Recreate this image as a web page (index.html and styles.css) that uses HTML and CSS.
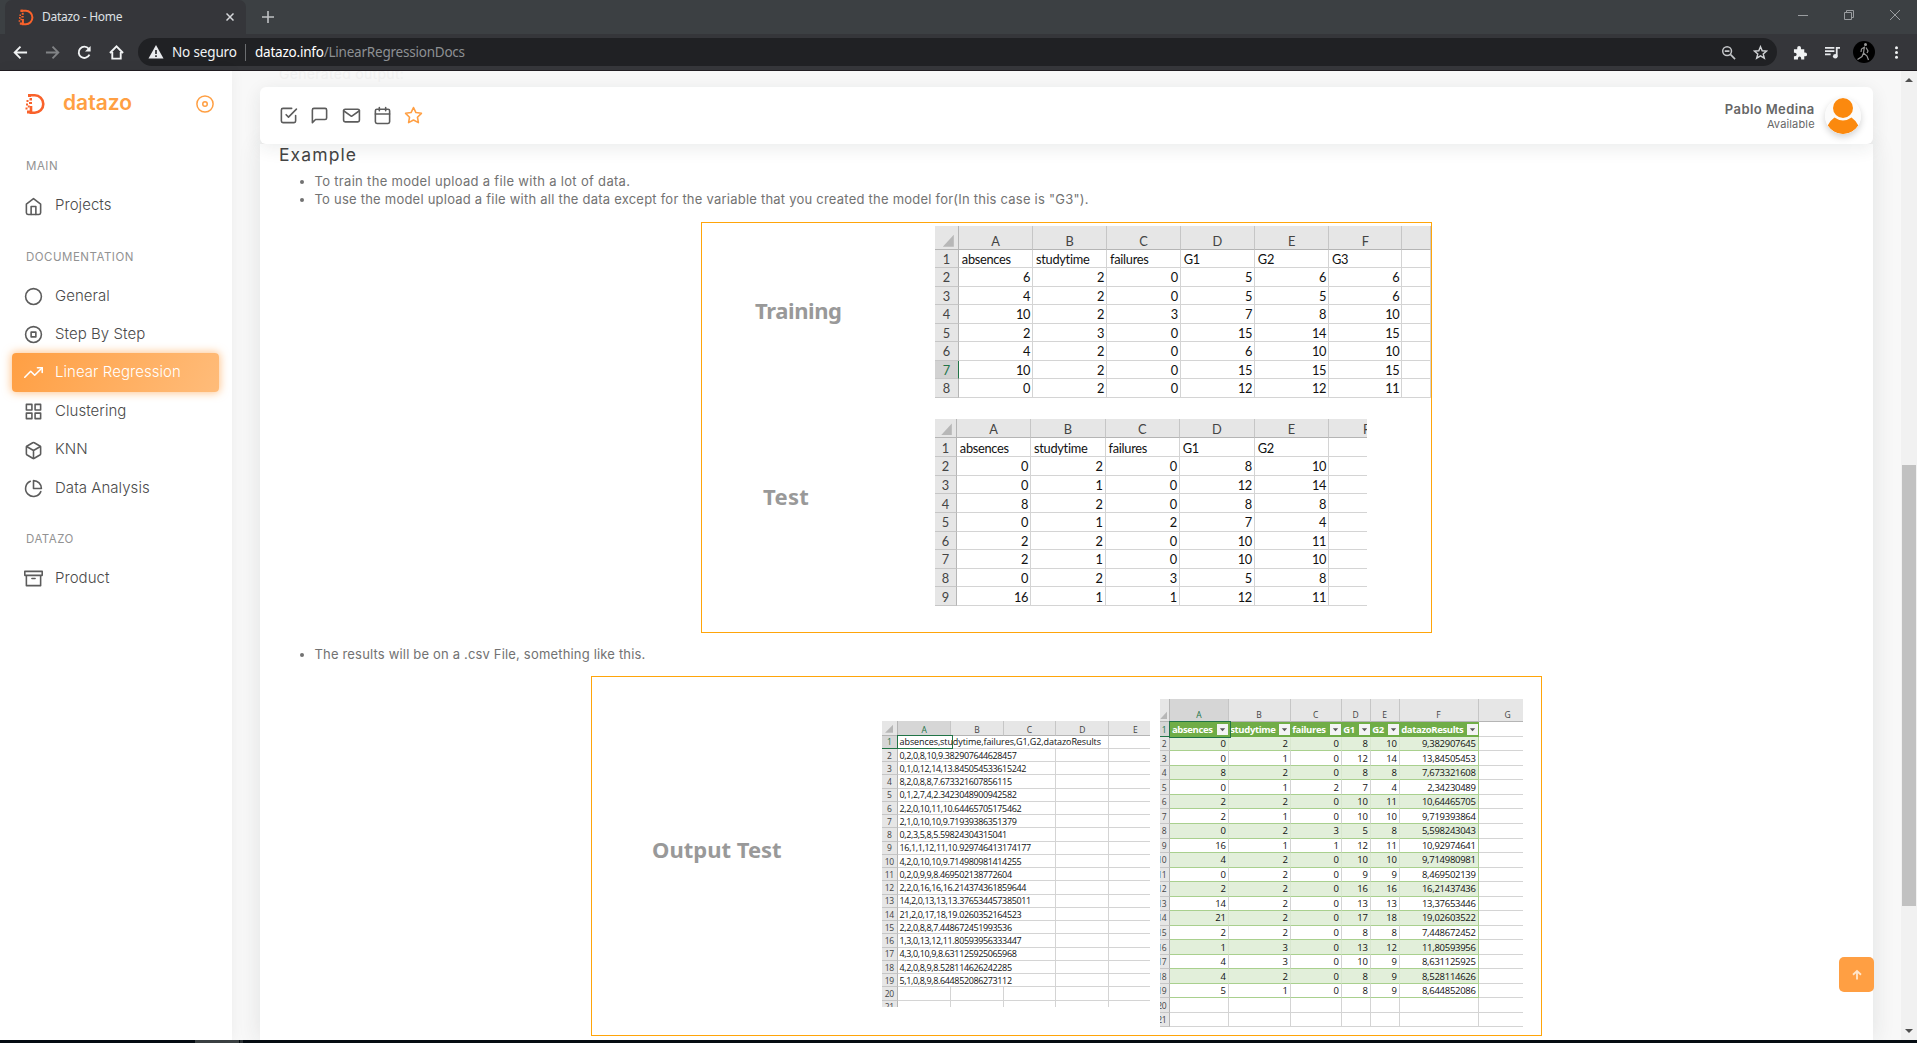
FILE: index.html
```
<!DOCTYPE html>
<html lang="es">
<head>
<meta charset="utf-8">
<title>Datazo - Home</title>
<link rel="stylesheet" href="styles.css">
</head>
<body>
<svg class="defs" aria-hidden="true">
  <symbol id="logo" viewBox="0 0 20 22">
    <path d="M3 2.300h6.800a8.500 8.700 0 0 1 0 17.400H4.500M6 13v7" fill="none" stroke="#f9622b" stroke-width="2.600"/>
    <path d="M3 1h3v3H3zM4.500 5h2.500v2.500H4.500zM1.500 7h2v2h-2zM4 9h3v2H4zM1 10.500h2v2H1zM2.800 12.500h2v2h-2zM.5 14.500h2v2h-2zM2 17.500h3v3H2z" fill="#f9622b"/>
  </symbol>
</svg>

<header class="tabstrip">
  <div class="tab">
    <svg class="favicon"><use href="#logo"/></svg>
    <span class="tab-title">Datazo - Home</span>
    <svg class="tab-close" viewBox="0 0 8 8"><path d="M.5.5l7 7M7.500.5l-7 7" stroke="#d5d7da" stroke-width="1.500"/></svg>
  </div>
  <svg class="new-tab" viewBox="0 0 12 12"><path d="M6 0v12M0 6h12" stroke="#bfc1c4" stroke-width="1.600"/></svg>
  <div class="window-buttons">
    <svg viewBox="0 0 12 12"><path d="M1 6.500h10" stroke="#9a9da0"/></svg>
    <svg viewBox="0 0 12 12"><path d="M1.500 3.500h7v7h-7zM3.500 3.500v-2h7v7h-2" fill="none" stroke="#9a9da0"/></svg>
    <svg viewBox="0 0 12 12"><path d="M1 1l10 10M11 1L1 11" stroke="#9a9da0"/></svg>
  </div>
</header>

<div class="toolbar">
  <span class="tool"><svg viewBox="0 0 16 16"><path d="M15 8H2M8 1.800L1.800 8 8 14.200" fill="none" stroke="#f1f3f4" stroke-width="2"/></svg></span>
  <span class="tool"><svg viewBox="0 0 16 16"><path d="M1 8h13M8 1.800L14.200 8 8 14.200" fill="none" stroke="#818386" stroke-width="2"/></svg></span>
  <span class="tool"><svg viewBox="0 0 16 16"><path d="M13.300 10.300A6 6 0 1 1 12.500 4" fill="none" stroke="#f1f3f4" stroke-width="2"/><path d="M14.500 1v6h-6z" fill="#f1f3f4"/></svg></span>
  <span class="tool"><svg viewBox="0 0 16 16"><path d="M1 8.500L8 1.500l7 7M3.500 7.500v7h9v-7" fill="none" stroke="#f1f3f4" stroke-width="2"/></svg></span>
  <div class="omnibox">
    <svg class="warning" viewBox="0 0 16 14"><path d="M8 0l7.500 13.500H.5z" fill="#e8eaed"/><path d="M8 5v4M8 10.300v1.700" stroke="#202124" stroke-width="1.600"/></svg>
    <span class="insecure">No seguro</span>
    <span class="url"><b>datazo.info</b><i>/LinearRegressionDocs</i></span>
    <span class="tool"><svg viewBox="0 0 16 16"><circle cx="6.500" cy="6.500" r="4.700" fill="none" stroke="#c4c6c9" stroke-width="1.600"/><path d="M4 6.500h5M10 10l5 5" stroke="#c4c6c9" stroke-width="1.700"/></svg></span>
    <span class="tool"><svg viewBox="0 0 16 16"><path d="M8 1.800l1.800 4.400 4.700.3-3.600 3 1.200 4.600L8 11.600l-4.100 2.500 1.200-4.600-3.600-3 4.700-.3z" fill="none" stroke="#d0d2d5" stroke-width="1.500"/></svg></span>
  </div>
  <span class="tool"><svg viewBox="0 0 16 16"><path d="M1 4.500h3.500V3a2 2 0 0 1 4 0v1.500H12V8h1a2 2 0 0 1 0 4h-1v3.500H8.700V14a1.700 1.700 0 0 0-3.400 0v1.500H1V12h1a1.900 1.900 0 0 0 0-3.800H1z" fill="#f1f3f4"/></svg></span>
  <span class="tool"><svg viewBox="0 0 16 16"><path d="M0 3h10M0 6.500h10M0 10h6M12.500 12V3H16" fill="none" stroke="#e8eaed" stroke-width="1.900"/><circle cx="11" cy="12" r="2.500" fill="#e8eaed"/></svg></span>
  <span class="tool"><svg class="profile" viewBox="0 0 22 22"><circle cx="11" cy="11" r="11"/><circle cx="12.500" cy="3.500" r="1.500" fill="#999"/><path d="M11.500 5.500l-1 6.500 3.500 3 1.500 4M10.500 12L9 15.500l-4.500 3M11.500 6L8.500 8l-.5 3M13 6.500l2 3.500-1 2" fill="none" stroke="#959595" stroke-width="1.200"/></svg></span>
  <span class="tool"><svg viewBox="0 0 16 16" fill="#f1f3f4"><circle cx="8" cy="3" r="1.600"/><circle cx="8" cy="8" r="1.600"/><circle cx="8" cy="13" r="1.600"/></svg></span>
</div>

<div class="page">
  <nav class="sidebar">
    <div class="brand">
      <svg class="brand-logo"><use href="#logo"/></svg>
      <span class="brand-name">datazo</span>
      <svg class="icon accent" viewBox="0 0 24 24"><circle cx="12" cy="12" r="10.800"/><circle cx="12" cy="12" r="3"/></svg>
    </div>
    <h6 class="section first">MAIN</h6>
    <a class="item"><svg class="icon" viewBox="0 0 24 24"><path d="M3 9l9-7 9 7v11a2 2 0 0 1-2 2H5a2 2 0 0 1-2-2z"/><path d="M9 22V12h6v10"/></svg>Projects</a>
    <h6 class="section">DOCUMENTATION</h6>
    <a class="item"><svg class="icon" viewBox="0 0 24 24"><circle cx="12" cy="12" r="10"/></svg>General</a>
    <a class="item"><svg class="icon" viewBox="0 0 24 24"><circle cx="12" cy="12" r="10"/><path d="M9 9h6v6H9z"/></svg>Step By Step</a>
    <a class="item active"><svg class="icon" viewBox="0 0 24 24"><path d="M23 6l-9.500 9.500-5-5L1 18"/><path d="M17 6h6v6"/></svg>Linear Regression</a>
    <a class="item"><svg class="icon" viewBox="0 0 24 24"><path d="M3 3h7v7H3zM14 3h7v7h-7zM14 14h7v7h-7zM3 14h7v7H3z"/></svg>Clustering</a>
    <a class="item"><svg class="icon" viewBox="0 0 24 24"><path d="M21 16V8a2 2 0 0 0-1-1.730l-7-4a2 2 0 0 0-2 0l-7 4A2 2 0 0 0 3 8v8a2 2 0 0 0 1 1.730l7 4a2 2 0 0 0 2 0l7-4A2 2 0 0 0 21 16z"/><path d="M3.270 6.960L12 12.010l8.730-5.050M12 22.080V12"/></svg>KNN</a>
    <a class="item"><svg class="icon" viewBox="0 0 24 24"><path d="M21.210 15.890A10 10 0 1 1 8 2.830"/><path d="M22 12A10 10 0 0 0 12 2v10z"/></svg>Data Analysis</a>
    <h6 class="section">DATAZO</h6>
    <a class="item"><svg class="icon" viewBox="0 0 24 24"><path d="M21 8v13H3V8M1 3h22v5H1zM10 12h4"/></svg>Product</a>
  </nav>

  <main class="main">
    <div class="faded">Generated output:</div>
    <div class="navbar">
      <svg class="icon" viewBox="0 0 24 24"><path d="M9 11l3 3L22 4"/><path d="M21 12v7a2 2 0 0 1-2 2H5a2 2 0 0 1-2-2V5a2 2 0 0 1 2-2h11"/></svg>
      <svg class="icon" viewBox="0 0 24 24"><path d="M21 15a2 2 0 0 1-2 2H7l-4 4V5a2 2 0 0 1 2-2h14a2 2 0 0 1 2 2z"/></svg>
      <svg class="icon" viewBox="0 0 24 24"><path d="M4 4h16c1.100 0 2 .9 2 2v12c0 1.100-.9 2-2 2H4c-1.100 0-2-.9-2-2V6c0-1.100.9-2 2-2z"/><path d="M22 6l-10 7L2 6"/></svg>
      <svg class="icon" viewBox="0 0 24 24"><rect x="3" y="4" width="18" height="18" rx="2"/><path d="M16 2v4M8 2v4M3 10h18"/></svg>
      <svg class="icon accent" viewBox="0 0 24 24"><path d="M12 2l3.090 6.260L22 9.270l-5 4.870 1.180 6.880L12 17.770l-6.180 3.250L7 14.140 2 9.270l6.910-1.010z"/></svg>
      <div class="user"><strong>Pablo Medina</strong><span>Available</span></div>
      <svg class="avatar" viewBox="0 0 36 36"><circle cx="18" cy="18" r="18" fill="#fbfbfb"/><circle cx="18" cy="10" r="10" fill="#fb890e"/><path d="M2.700 27.500Q5 22.500 9.500 19.500Q18 25.500 26.500 19.500Q31 22.500 33.300 27.500A18 18 0 0 1 2.700 27.500z" fill="#fb890e"/></svg>
    </div>
    <section class="content">
      <h4>Example</h4>
      <ul>
        <li class="l1">To train the model upload a file with a lot of data.</li>
        <li class="l2">To use the model upload a file with all the data except for the variable that you created the model for(In this case is "G3").</li>
      </ul>
      <figure class="inputs">
        <h2 class="training-label">Training</h2>
        <div class="sheet big" id="training"></div>
        <h2 class="test-label">Test</h2>
        <div class="sheet big" id="test"></div>
      </figure>
      <ul>
        <li class="l3">The results will be on a .csv File, something like this.</li>
      </ul>
      <figure class="outputs">
        <h2>Output Test</h2>
        <div class="sheet small csv" id="csv"></div>
        <div class="sheet small results" id="results"></div>
      </figure>
    </section>
    <a class="to-top"><svg viewBox="0 0 24 24"><path d="M12 21V4M4 11.500L12 4l8 7.500" fill="none" stroke="#ffe6cb" stroke-width="3.600"/></svg></a>
  </main>

  <div class="scrollbar"><i class="up"></i><div class="thumb"></div><i class="down"></i></div>
</div>
<footer class="taskbar"><span></span><em></em></footer>
<script src="sheets.js"></script>
</body>
</html>
```
FILE: styles.css
```
* { box-sizing: border-box; }
body { margin: 0; height: 1043px; display: flex; flex-direction: column; overflow: hidden; font-family: Inter, "Liberation Sans", sans-serif; background: #f8f8f8; }
h2, h4, h6, ul, figure { margin: 0; padding: 0; }
svg { display: block; flex: none; }
.defs { width: 0; height: 0; position: absolute; }

/* browser chrome */
.tabstrip { height: 34px; flex: none; background: #3c4043; display: flex; align-items: center; padding-left: 5px; }
.tab { width: 241px; height: 34px; background: #35363a; border-radius: 7px 7px 0 0; display: flex; align-items: center; padding: 0 12px 0 13px; }
.favicon { width: 16px; height: 17px; }
.tab-title { margin-left: 8px; font: 12px/16px "Noto Sans", sans-serif; letter-spacing: -.27px; color: #dfe1e5; flex: 1; padding-bottom: 1px; }
.tab-close { width: 8px; height: 8px; }
.new-tab { width: 12px; height: 12px; margin-left: 16px; }
.window-buttons { margin-left: auto; display: flex; gap: 34px; padding: 0 16px 5px 0; }
.window-buttons svg { width: 12px; height: 12px; }
.toolbar { height: 37px; flex: none; background: #35363a; border-bottom: 1px solid #211d22; display: flex; align-items: center; padding: 0 5px 0 4px; }
.tool { width: 32px; display: flex; justify-content: center; flex: none; }
.tool svg { width: 15px; height: 15px; }
.tool .profile { width: 22px; height: 22px; }
.omnibox { flex: 1; height: 28px; margin: 0 7px 0 6px; padding: 0 1px 0 10px; border-radius: 14px; background: #202124; display: flex; align-items: center; font: 13.5px "Noto Sans", sans-serif; }
.omnibox .warning { width: 16px; height: 14px; }
.insecure { margin-left: 8px; padding-right: 8px; border-right: 1px solid #6b6d70; color: #f1f3f4; letter-spacing: -.15px; line-height: 17px; width: 74px; white-space: nowrap; }
.url { flex: 1; padding-left: 9px; letter-spacing: -.22px; }
.url b { font-weight: 400; color: #fff; }
.url i { font-style: normal; color: #8d9093; }

.page { flex: 1; min-height: 0; display: flex; }

/* sidebar */
.icon { width: 19px; height: 19px; fill: none; stroke: #5c5c5c; stroke-width: 2; stroke-linecap: round; stroke-linejoin: round; }
.icon.accent { stroke: #ff9f43; }
.sidebar { width: 232px; flex: none; background: #fff; box-shadow: 0 0 14px rgba(0,0,0,.05); z-index: 1; }
.brand { height: 65px; display: flex; align-items: center; padding: 0 18px 0 25px; }
.brand-logo { width: 20px; height: 22px; }
.brand-name { flex: 1; margin-left: 18px; font-size: 21px; font-weight: 600; line-height: 24px; padding-bottom: 1px; color: #ff9f43; }
.brand .icon { width: 18px; height: 18px; }
.section { height: 37.6px; margin: 14.4px 0 0 26px; line-height: 37px; font-size: 11.500px; font-weight: 400; letter-spacing: .5px; color: #929292; }
.section.first { margin-top: 12.4px; }
.item { height: 38.4px; margin: 0 13px 0 12px; padding-left: 12px; display: flex; align-items: center; gap: 12px; font-size: 15px; font-weight: 300; letter-spacing: .05px; line-height: 18px; color: #4a4a4a; border-radius: 4px; }
.item .icon { position: relative; top: 1px; }
.item.active { color: #fff; background: linear-gradient(118deg, #ff9f43, #ffbc7a); box-shadow: 0 0 8px 1px rgba(255,159,67,.6); }
.item.active .icon { stroke: #fff; top: 0; }

/* main column */
.main { flex: 1; min-width: 0; padding: 0 28px; display: flex; flex-direction: column; position: relative; overflow: hidden; }
.faded { height: 16px; flex: none; padding-left: 19px; font-size: 14px; line-height: 5px; color: #f0f0f0; letter-spacing: .3px; }
.navbar { height: 57px; flex: none; background: #fff; border-radius: 6px; box-shadow: 0 4px 18px rgba(34,41,47,.09); z-index: 1; display: flex; align-items: center; gap: 12.300px; padding: 0 12px 0 19px; }
.user { margin-left: auto; text-align: right; display: flex; flex-direction: column; margin-right: -2px; color: #666; }
.user strong { font-size: 13px; font-weight: 600; letter-spacing: .4px; line-height: 16px; }
.user span { font-size: 11px; line-height: 14px; letter-spacing: .15px; }
.avatar { width: 36px; height: 36px; border-radius: 50%; box-shadow: 0 3px 7px rgba(0,0,0,.18); }
.content { flex: 1; min-height: 0; background: #fff; padding: 0 19px; box-shadow: 0 0 22px rgba(34,41,47,.11); }
.content h4 { font-size: 17.500px; font-weight: 400; line-height: 22px; letter-spacing: 1.1px; color: #444; margin-bottom: 6px; }
.content ul { padding-left: 35.5px; font-size: 13px; line-height: 18.2px; color: #727272; }
.content li { white-space: nowrap; }
.l1 { letter-spacing: .314px; }
.l2 { letter-spacing: .226px; }
.l3 { letter-spacing: .175px; }
figure { border: 1px solid #ffa50a; margin: 0 auto !important; }
figure h2 { font: 700 22px "Noto Sans", sans-serif; color: #999; white-space: nowrap; }
.inputs { width: 731px; height: 411px; margin-top: 13.600px !important; margin-bottom: 11.500px !important; padding-top: 3.300px; display: grid; grid-template-columns: 233px 1fr; align-content: start; align-items: center; row-gap: 21px; }
.training-label { padding: 0 0 4px 53px; letter-spacing: -.4px; }
.inputs .test-label { padding: 0 0 33px 61px; letter-spacing: .3px; }
.outputs { width: 951px; height: 360px; margin-top: 13.300px !important; display: flex; align-items: flex-start; }
.outputs h2 { width: 289.700px; padding: 157px 0 0 60px; }

/* spreadsheets */
.sheet { display: grid; overflow: hidden; justify-content: start; color: #111; }
.cell { min-width: 0; border-right: 1px solid #d4d4d4; border-bottom: 1px solid #d4d4d4; display: flex; align-items: center; justify-content: flex-end; white-space: nowrap; overflow: hidden; }
.cell.text { justify-content: flex-start; }
.cell.letter { justify-content: center; background: #e6e6e6; color: #444; border-color: #c6c6c6; border-bottom-color: #b5b5b5; align-items: flex-end; }
.cell.index { justify-content: center; background: #e6e6e6; color: #444; border-color: #b5b5b5 #b5b5b5 #c6c6c6; }
.cell.corner { background: #e6e6e6; border-color: #b5b5b5; align-items: flex-end; }
.cell.corner::after { content: ""; width: 11px; height: 12px; background: #b7b7b7; clip-path: polygon(100% 0, 100% 100%, 0 100%); margin: 0 2px 2px 0; }
.big { font: 12.800px Lato, sans-serif; letter-spacing: -.28px; align-self: start; }
.big .cell { padding: 1px 2px 0 3px; }
.big .num { letter-spacing: -.45px; }
.big .index { padding: 1px 0 0; }
.big .letter { padding: 0 3px; }
.big .picked { background: #d2d2d2; color: #217346; border-right: 1px solid #217346; }
.big .cut { justify-content: flex-start; padding: 0 0 0 34px; }
.small { font: 9px "Open Sans", sans-serif; letter-spacing: -.37px; }
.small .corner::after { width: 8px; height: 8px; }
.small .cell { padding: 0 2px 0 1.500px; }
.small .index, .small .letter { font-size: 8.500px; }
.small .chosen { color: #217346; background: #d6d6d6; border-bottom-color: #217346; }
.csv { width: 268.300px; margin-top: 44.300px; height: 286px; }
.csv .text { overflow: visible; }
.csv .names { letter-spacing: -.09px; }
.sel { position: relative; }
.sel::before { content: ""; position: absolute; left: -1px; top: -1px; width: var(--sel); bottom: -1px; border: 1.500px solid #217346; }
.results { width: 362.700px; margin: 22px 0 0 10px; font-size: 9.500px; letter-spacing: -.28px; }
.results .letter { padding-bottom: 1px; }
.results .index { justify-content: flex-end; padding: 0 3px 0 0; }
.results .corner { padding: 0; }
.results .field { background: #70ad47; color: #fff; font-weight: 700; font-size: 9.500px; letter-spacing: -.34px; border: 0; justify-content: space-between; padding: 0 1px 0 1.500px; overflow: visible; }
.results .field svg { width: 11px; height: 11px; }
.results .band { background: #e2efda; border-right-color: #d9e8cf; border-bottom-color: #a9d08e; }
.results .plain { border-bottom-color: #a9d08e; }
.results .edge { border-right: 1px solid #a9d08e; }

.to-top { position: absolute; right: 27px; top: 886px; width: 35px; height: 35px; border-radius: 5px; background: #ff9f43; display: flex; align-items: center; justify-content: center; z-index: 2; }
.to-top svg { width: 12px; height: 12px; }

.scrollbar { width: 16px; flex: none; background: #f1f1f1; display: flex; flex-direction: column; align-items: center; z-index: 1; }
.scrollbar .up { margin-top: 7px; border: 4px solid transparent; border-top: 0; border-bottom: 4px solid #505050; }
.scrollbar .down { margin: auto 0 7px; border: 4px solid transparent; border-bottom: 0; border-top: 4px solid #505050; }
.thumb { width: 14px; height: 441px; margin-top: 383px; background: #c1c1c1; }
.taskbar { height: 3px; flex: none; background: #050c12; display: flex; gap: 1px; padding-left: 195px; }
.taskbar span { width: 44px; background: #3b4143; }
.taskbar em { width: 3px; background: #2b3134; }
```
FILE: sheets.js
```
// Builds the spreadsheet previews inside the two figures.
function cell(sheet, cls, text, span) {
  const el = document.createElement('div');
  el.className = 'cell ' + cls;
  if (text !== undefined) el.textContent = text;
  if (span) el.style.gridColumn = 'span ' + span;
  sheet.append(el);
  return el;
}

function layout(id, cols, head, row, count, last) {
  const sheet = document.getElementById(id);
  sheet.style.gridTemplateColumns = cols.map(c => c + 'px').join(' ');
  sheet.style.gridTemplateRows = `${head}px repeat(${count}, ${row}px)` + (last ? ` ${last}px` : '');
  return sheet;
}

function numeric(id, cols, head, row, letters, names, rows, picked) {
  const sheet = layout(id, cols, head, row, rows.length + 1);
  cell(sheet, 'corner');
  letters.forEach(l => cell(sheet, 'letter', l));
  [names, ...rows].forEach((values, r) => {
    cell(sheet, 'index' + (r + 1 === picked ? ' picked' : ''), r + 1);
    letters.forEach((_, c) => cell(sheet, r ? 'num' : 'text', values[c] ?? ''));
  });
}

const names = ['absences', 'studytime', 'failures', 'G1', 'G2'];

numeric('training', [23.8, 74.2, 74.1, 73.7, 74.1, 74.2, 73.2, 28.7], 23.4, 18.5,
  ['A', 'B', 'C', 'D', 'E', 'F', ''], [...names, 'G3'], [
    [6, 2, 0, 5, 6, 6], [4, 2, 0, 5, 5, 6], [10, 2, 3, 7, 8, 10], [2, 3, 0, 15, 14, 15],
    [4, 2, 0, 6, 10, 10], [10, 2, 0, 15, 15, 15], [0, 2, 0, 12, 12, 11]], 7);

numeric('test', [21.8, 74.2, 74.6, 74.1, 75.1, 74.2, 37.8], 19.7, 18.63,
  ['A', 'B', 'C', 'D', 'E', 'F'], names, [
    [0, 2, 0, 8, 10], [0, 1, 0, 12, 14], [8, 2, 0, 8, 8], [0, 1, 2, 7, 4],
    [2, 2, 0, 10, 11], [2, 1, 0, 10, 10], [0, 2, 3, 5, 8], [16, 1, 1, 12, 11]]);
document.querySelectorAll('#test .letter')[5].classList.add('cut');
document.querySelectorAll('#test .cell:nth-child(7n)').forEach(c => c.style.borderRightWidth = '0');

const lines = [
  'absences,studytime,failures,G1,G2,datazoResults',
  '0,2,0,8,10,9.382907644628457', '0,1,0,12,14,13.845054533615242', '8,2,0,8,8,7.673321607856115',
  '0,1,2,7,4,2.3423048900942582', '2,2,0,10,11,10.64465705175462', '2,1,0,10,10,9.71939386351379',
  '0,2,3,5,8,5.59824304315041', '16,1,1,12,11,10.929746413174177', '4,2,0,10,10,9.714980981414255',
  '0,2,0,9,9,8.469502138772604', '2,2,0,16,16,16.214374361859644', '14,2,0,13,13,13.376534457385011',
  '21,2,0,17,18,19.0260352164523', '2,2,0,8,8,7.448672451993536', '1,3,0,13,12,11.80593956333447',
  '4,3,0,10,9,8.631125925065968', '4,2,0,8,9,8.528114626242285', '5,1,0,8,9,8.644852086273112'];
const csv = layout('csv', [16.4, 53.3, 52.4, 52.6, 53, 53], 14.4, 13.25, 21);
cell(csv, 'corner');
['A', 'B', 'C', 'D', 'E'].forEach((l, i) => cell(csv, 'letter' + (i ? '' : ' chosen'), l));
lines.forEach((line, r) => {
  cell(csv, 'index' + (r ? '' : ' chosen'), r + 1);
  const text = cell(csv, 'text' + (r ? '' : ' names sel'), line, r ? 3 : 4);
  if (!r) text.style.setProperty('--sel', '54px');
  for (let c = r ? 3 : 4; c < 5; c++) cell(csv, '');
});
[20, 21].forEach(n => {
  cell(csv, 'index', n);
  for (let c = 0; c < 5; c++) cell(csv, '');
});

const table = [
  [0, 2, 0, 8, 10, '9,382907645'], [0, 1, 0, 12, 14, '13,84505453'], [8, 2, 0, 8, 8, '7,673321608'],
  [0, 1, 2, 7, 4, '2,34230489'], [2, 2, 0, 10, 11, '10,64465705'], [2, 1, 0, 10, 10, '9,719393864'],
  [0, 2, 3, 5, 8, '5,598243043'], [16, 1, 1, 12, 11, '10,92974641'], [4, 2, 0, 10, 10, '9,714980981'],
  [0, 2, 0, 9, 9, '8,469502139'], [2, 2, 0, 16, 16, '16,21437436'], [14, 2, 0, 13, 13, '13,37653446'],
  [21, 2, 0, 17, 18, '19,02603522'], [2, 2, 0, 8, 8, '7,448672452'], [1, 3, 0, 13, 12, '11,80593956'],
  [4, 3, 0, 10, 9, '8,631125925'], [4, 2, 0, 8, 9, '8,528114626'], [5, 1, 0, 8, 9, '8,644852086']];
const results = layout('results', [10.4, 58.3, 62, 51, 29, 29, 79, 59], 23.3, 14.54, 21);
cell(results, 'corner');
['A', 'B', 'C', 'D', 'E', 'F', 'G'].forEach((l, i) => cell(results, 'letter' + (i ? '' : ' chosen'), l));
cell(results, 'index chosen', 1);
const arrow = '<svg viewBox="0 0 11 11"><path d="M0 0h11v11H0z" fill="#f4f4f4"/><path d="M2.800 4.200h5.400L5.500 7.200z" fill="#555"/></svg>';
[...names, 'datazoResults'].forEach((n, i) => {
  const field = cell(results, 'field' + (i ? '' : ' sel'), n);
  field.insertAdjacentHTML('beforeend', arrow);
  if (!i) field.style.setProperty('--sel', '60px');
});
cell(results, '');
table.forEach((values, r) => {
  cell(results, 'index', r + 2);
  values.forEach((v, c) => cell(results, (r % 2 ? 'plain' : 'band') + (c === 5 ? ' edge' : ''), v));
  cell(results, '');
});
[20, 21].forEach(n => {
  cell(results, 'index', n);
  for (let c = 0; c < 7; c++) cell(results, '');
});
```
